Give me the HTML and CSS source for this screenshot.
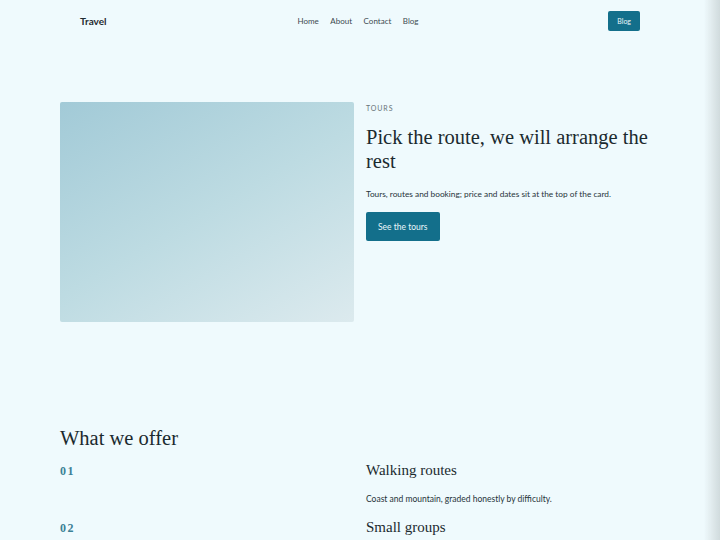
FILE: index.html
```html
<!DOCTYPE html>
<html lang="en">
<head>
    <meta charset="UTF-8" />
    <meta name="viewport" content="width=device-width, initial-scale=1.0" />
    <title>Travel</title>
    <link rel="stylesheet" href="styles.css">
</head>
<body>
    <header class="topbar">
        <a class="brand" href="#">Travel</a>
        <nav class="links">
            <a href="#">Home</a>
            <a href="#">About</a>
            <a href="#">Contact</a>
            <a href="#">Blog</a>
        </nav>
        <div class="actions">
            <a class="btn btn-small" href="#">Blog</a>
        </div>
    </header>

    <main class="page">
        <section class="hero">
            <div class="hero-image"></div>
            <div class="hero-text">
                <p class="eyebrow">Tours</p>
                <h1>Pick the route, we will arrange the rest</h1>
                <p class="lead">Tours, routes and booking; price and dates sit at the top of the card.</p>
                <a class="btn" href="#">See the tours</a>
            </div>
        </section>

        <section class="offer">
            <h2>What we offer</h2>
            <div class="offer-row">
                <span class="num">01</span>
                <div>
                    <h3>Walking routes</h3>
                    <p>Coast and mountain, graded honestly by difficulty.</p>
                </div>
            </div>
            <div class="offer-row">
                <span class="num">02</span>
                <div>
                    <h3>Small groups</h3>
                    <p>Never more than twelve people on a single departure.</p>
                </div>
            </div>
        </section>
    </main>

    <div class="edge"></div>
</body>
</html>
```

FILE: styles.css
```css
body {
    font-family: Lato, 'Liberation Sans', sans-serif;
    margin: 0;
    padding: 0;
    background-color: #effafd;
    color: #1c2a30;
}

a {
    text-decoration: none;
    color: inherit;
}

.topbar {
    display: grid;
    grid-template-columns: 1fr auto 1fr;
    align-items: center;
    padding: 11px 80px 0 80px;
    height: 20px;
}

.brand {
    font-size: 10px;
    font-weight: bold;
    color: #1f2b30;
}

.links {
    display: flex;
    gap: 11.5px;
    font-size: 8px;
    color: #3d4a50;
    margin-right: 4px;
}

.actions {
    display: flex;
    justify-content: flex-end;
}

.btn {
    display: inline-block;
    background-color: #136f8b;
    color: #eaf6fa;
    font-size: 8.5px;
    padding: 10px 12px 9px 12px;
    border-radius: 2px;
}

.btn-small {
    font-size: 7px;
    padding: 6px 9px;
    line-height: 8px;
}

.page {
    width: 600px;
    margin: 0 auto;
}

.hero {
    display: grid;
    grid-template-columns: 1fr 1fr;
    gap: 12px;
    margin-top: 71px;
}

.hero-image {
    height: 220px;
    border-radius: 2px;
    background: linear-gradient(150deg, #a2cad7 0%, #bddbe2 50%, #dceaee 100%);
}

.eyebrow {
    font-size: 7px;
    letter-spacing: 0.9px;
    text-transform: uppercase;
    color: #687478;
    margin: 2px 0 0 0;
}

h1, h2, h3 {
    font-family: 'Liberation Serif', 'DejaVu Serif', serif;
    font-weight: normal;
    color: #1b2a2f;
}

h1 {
    font-size: 20.5px;
    line-height: 24px;
    margin: 13px 0 0 0;
}

.lead {
    font-size: 8.3px;
    margin: 16px 0 13px 0;
    color: #27343a;
}

.offer {
    margin-top: 105px;
}

h2 {
    font-size: 20.5px;
    margin: 0 0 12px 0;
}

.offer-row {
    display: grid;
    grid-template-columns: 1fr 1fr;
    gap: 12px;
    margin-bottom: 15px;
}

.num {
    font-family: 'Liberation Serif', serif;
    font-size: 12px;
    font-weight: bold;
    color: #3b8196;
    letter-spacing: 1.5px;
    padding-top: 2px;
}

h3 {
    font-size: 15px;
    margin: 0;
}

.offer-row p {
    font-size: 8.5px;
    margin: 15px 0 0 0;
    color: #27343a;
}

/* soft shade down the right side of the window */
.edge {
    position: fixed;
    top: 0;
    right: 0;
    width: 16px;
    height: 100vh;
    background: linear-gradient(to right, rgba(200, 215, 218, 0), rgba(205, 215, 217, 0.9));
    pointer-events: none;
}
```
